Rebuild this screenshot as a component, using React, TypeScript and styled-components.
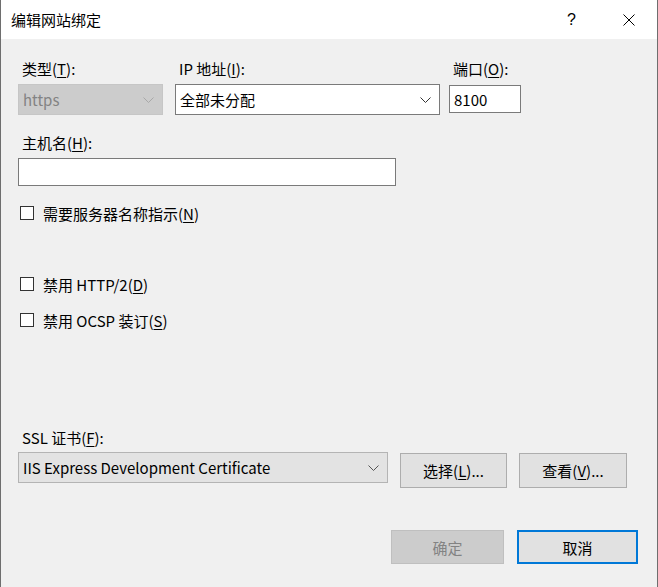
import React from "react";
import styled, { createGlobalStyle } from "styled-components";

const GlobalStyle = createGlobalStyle`
  html, body {
    margin: 0;
    padding: 0;
    background: #f0f0f0;
  }
  * {
    box-sizing: border-box;
  }
`;

const Window = styled.div`
  width: 658px;
  height: 587px;
  display: flex;
  flex-direction: column;
  background: #f0f0f0;
  border-left: 1px solid #6e6e6e;
  border-right: 1px solid #6e6e6e;
  font-family: "Noto Sans CJK SC", "Noto Sans", sans-serif;
  font-size: 15px;
  color: #000;
`;

const TitleBar = styled.div`
  height: 39px;
  flex-shrink: 0;
  background: #fff;
  display: flex;
  align-items: center;
  padding-left: 10px;
`;

const Title = styled.div`
  flex: 1;
  font-size: 15px;
`;

const TitleButton = styled.div`
  width: 57px;
  height: 39px;
  display: flex;
  align-items: center;
  justify-content: center;
  font-family: "Liberation Sans", sans-serif;
  font-size: 16px;
`;

const Body = styled.div`
  flex: 1;
  display: flex;
  flex-direction: column;
  padding: 20px 19px 0 17px;
`;

const FieldRow = styled.div`
  display: flex;
`;

const Field = styled.div<{ $w: number; $left?: number }>`
  display: flex;
  flex-direction: column;
  width: ${(p) => p.$w}px;
  margin-left: ${(p) => p.$left ?? 0}px;
`;

const Label = styled.div<{ $gap?: number; $top?: number }>`
  height: 20px;
  line-height: 20px;
  padding-left: 4px;
  margin-top: ${(p) => p.$top ?? 0}px;
  margin-bottom: ${(p) => p.$gap ?? 5}px;
  white-space: nowrap;
`;

const Key = styled.span`
  text-decoration: underline;
  text-underline-offset: 2px;
`;

const Combo = styled.div<{ $variant: "disabled" | "edit" | "list"; $w?: number }>`
  height: 31px;
  width: ${(p) => (p.$w ? `${p.$w}px` : "auto")};
  display: flex;
  align-items: center;
  padding: 0 8px 0 4px;
  border: 1px solid
    ${(p) =>
      p.$variant === "disabled"
        ? "#c6c6c6"
        : p.$variant === "edit"
        ? "#7a7a7a"
        : "#b4b4b4"};
  background: ${(p) =>
    p.$variant === "disabled" ? "#cccccc" : p.$variant === "edit" ? "#fff" : "#e3e3e3"};
  color: ${(p) => (p.$variant === "disabled" ? "#838383" : "#000")};
`;

const ComboText = styled.span`
  flex: 1;
  white-space: nowrap;
`;

const TextBox = styled.div<{ $w: number; $h: number; $top?: number }>`
  width: ${(p) => p.$w}px;
  height: ${(p) => p.$h}px;
  margin-top: ${(p) => p.$top ?? 0}px;
  background: #fff;
  border: 1px solid #7a7a7a;
  padding: 0 4px;
  display: flex;
  align-items: center;
`;

const CheckRow = styled.div<{ $top: number }>`
  display: flex;
  align-items: center;
  gap: 9px;
  margin-top: ${(p) => p.$top}px;
  height: 20px;
  padding-left: 2px;
`;

const Box = styled.div`
  width: 14px;
  height: 14px;
  background: #fff;
  border: 1px solid #333;
`;

const SslRow = styled.div`
  display: flex;
  align-items: flex-start;
  gap: 12px;
`;

const Button = styled.div<{ $w: number; $variant?: "disabled" | "default"; $top?: number }>`
  width: ${(p) => p.$w}px;
  height: ${(p) => (p.$variant ? 34 : 35)}px;
  margin-top: ${(p) => p.$top ?? 0}px;
  display: flex;
  align-items: center;
  justify-content: center;
  background: ${(p) => (p.$variant === "disabled" ? "#cccccc" : "#e1e1e1")};
  color: ${(p) => (p.$variant === "disabled" ? "#838383" : "#000")};
  border: ${(p) =>
    p.$variant === "default"
      ? "2px solid #0078d7"
      : p.$variant === "disabled"
      ? "1px solid #bfbfbf"
      : "1px solid #adadad"};
`;

const Footer = styled.div`
  display: flex;
  justify-content: flex-end;
  gap: 13px;
  margin-top: 42px;
`;

const Chevron = ({ color = "#000" }: { color?: string }) => (
  <svg width="11" height="6" viewBox="0 0 11 6">
    <polyline points="0.5,0.5 5.5,5.5 10.5,0.5" fill="none" stroke={color} strokeWidth="1" />
  </svg>
);

export default function App() {
  return (
    <>
      <GlobalStyle />
      <Window>
        <TitleBar>
          <Title>编辑网站绑定</Title>
          <TitleButton>?</TitleButton>
          <TitleButton>
            <svg width="12" height="12" viewBox="0 0 12 12">
              <path d="M0.5 0.5 L11.5 11.5 M11.5 0.5 L0.5 11.5" stroke="#000" strokeWidth="1" />
            </svg>
          </TitleButton>
        </TitleBar>
        <Body>
          <FieldRow>
            <Field $w={145}>
              <Label>
                类型(<Key>T</Key>):
              </Label>
              <Combo $variant="disabled">
                <ComboText>https</ComboText>
                <Chevron color="#a8a8a8" />
              </Combo>
            </Field>
            <Field $w={265} $left={12}>
              <Label>
                IP 地址(<Key>I</Key>):
              </Label>
              <Combo $variant="edit">
                <ComboText>全部未分配</ComboText>
                <Chevron color="#333" />
              </Combo>
            </Field>
            <Field $w={72} $left={9}>
              <Label>
                端口(<Key>O</Key>):
              </Label>
              <TextBox $w={72} $h={28} $top={1}>
                8100
              </TextBox>
            </Field>
          </FieldRow>
          <Label $top={18}>
            主机名(<Key>H</Key>):
          </Label>
          <TextBox $w={378} $h={28} />
          <CheckRow $top={17}>
            <Box />
            <span>
              需要服务器名称指示(<Key>N</Key>)
            </span>
          </CheckRow>
          <CheckRow $top={51}>
            <Box />
            <span>
              禁用 HTTP/2(<Key>D</Key>)
            </span>
          </CheckRow>
          <CheckRow $top={16}>
            <Box />
            <span>
              禁用 OCSP 装订(<Key>S</Key>)
            </span>
          </CheckRow>
          <Label $top={98} $gap={4}>
            SSL 证书(<Key>F</Key>):
          </Label>
          <SslRow>
            <Combo $variant="list" $w={370}>
              <ComboText>IIS Express Development Certificate</ComboText>
              <Chevron color="#555" />
            </Combo>
            <Button $w={107} $top={1}>
              选择(<Key>L</Key>)...
            </Button>
            <Button $w={108} $top={1}>
              查看(<Key>V</Key>)...
            </Button>
          </SslRow>
          <Footer>
            <Button $w={113} $variant="disabled">
              确定
            </Button>
            <Button $w={121} $variant="default">
              取消
            </Button>
          </Footer>
        </Body>
      </Window>
    </>
  );
}
